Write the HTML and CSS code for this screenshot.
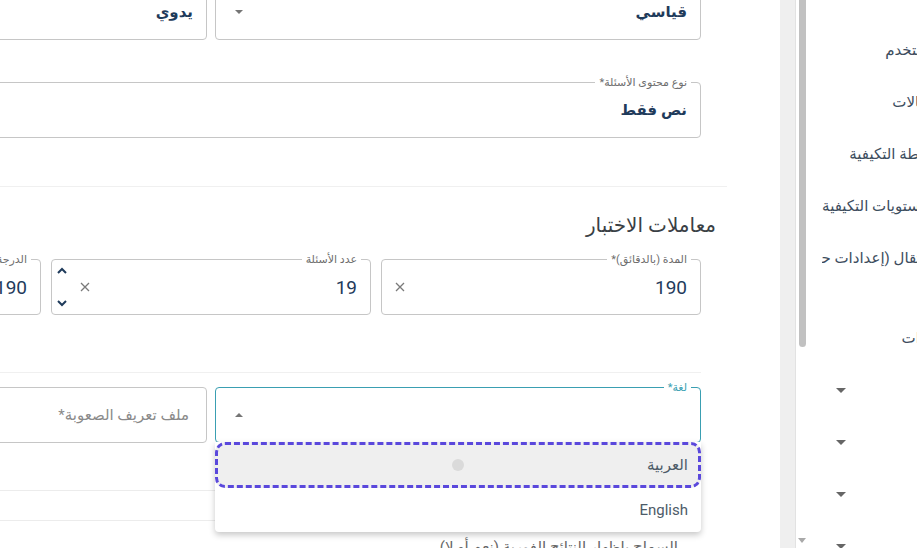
FILE: index.html
```html
<!DOCTYPE html>
<html lang="ar">
<head>
  <meta charset="UTF-8" />
  <title>إعدادات الاختبار</title>
  <link rel="stylesheet" href="styles.css">
</head>
<body>
  <div class="main">
    <div class="panel">

      <div class="row pair">
        <div class="field">
          <span class="label">نوع الاختبار*</span>
          <span class="value">قياسي</span>
          <span class="caret"></span>
        </div>
        <div class="field">
          <span class="label">طريقة التصحيح*</span>
          <span class="value">يدوي</span>
          <span class="caret"></span>
        </div>
      </div>

      <div class="field wide">
        <span class="label">نوع محتوى الأسئلة*</span>
        <span class="value">نص فقط</span>
      </div>

      <div class="divider full"></div>

      <h2 class="section-title">معاملات الاختبار</h2>

      <div class="row triple">
        <div class="field">
          <span class="label">المدة (بالدقائق)*</span>
          <span class="number">190</span>
          <span class="clear">
            <svg width="10" height="10" viewBox="0 0 10 10"><path d="M1 1L9 9M9 1L1 9" /></svg>
          </span>
        </div>
        <div class="field has-spin">
          <span class="label">عدد الأسئلة</span>
          <span class="number">19</span>
          <span class="clear">
            <svg width="10" height="10" viewBox="0 0 10 10"><path d="M1 1L9 9M9 1L1 9" /></svg>
          </span>
          <span class="spin">
            <svg width="12" height="8" viewBox="0 0 12 8"><path d="M2 6L6 2L10 6" /></svg>
            <svg width="12" height="8" viewBox="0 0 12 8"><path d="M2 2L6 6L10 2" /></svg>
          </span>
        </div>
        <div class="field">
          <span class="label">الدرجة النهائية*</span>
          <span class="number">190</span>
          <span class="clear">
            <svg width="10" height="10" viewBox="0 0 10 10"><path d="M1 1L9 9M9 1L1 9" /></svg>
          </span>
        </div>
      </div>

      <div class="divider"></div>

      <div class="row pair lang-row">
        <div class="field focused">
          <span class="label">لغة*</span>
          <span class="caret up"></span>
          <ul class="menu">
            <li class="option active">العربية<span class="ripple"></span></li>
            <li class="option">English</li>
          </ul>
        </div>
        <div class="field">
          <span class="placeholder">ملف تعريف الصعوبة*</span>
        </div>
      </div>

      <div class="toggle-row"></div>
      <div class="hint">السماح بإظهار النتائج الفورية (نعم أو لا)</div>

    </div>
  </div>

  <div class="gutter"></div>

  <aside class="sidebar">
    <div class="scrollbar">
      <div class="thumb"></div>
      <span class="scroll-arrow"></span>
    </div>
    <nav class="nav">
      <div class="nav-item">مستخدم</div>
      <div class="nav-item">الحالات</div>
      <div class="nav-item">الخطة التكيفية</div>
      <div class="nav-item">المستويات التكيفية</div>
      <div class="nav-item">الانتقال (إعدادات حذف الأسئلة)</div>
      <div class="nav-item gap">أدوات</div>
      <div class="nav-item group">التقارير<span class="arrow"></span></div>
      <div class="nav-item group">المحتوى<span class="arrow"></span></div>
      <div class="nav-item group">الأقسام<span class="arrow"></span></div>
      <div class="nav-item group">الدعم<span class="arrow"></span></div>
    </nav>
  </aside>
</body>
</html>
```

FILE: styles.css
```css
* {
  box-sizing: border-box;
}
body {
  margin: 0;
  height: 548px;
  overflow: hidden;
  display: flex;
  background: #fff;
  font-family: Roboto, "DejaVu Sans", sans-serif;
  color: #1f3b5b;
}

/* main form area */
.main {
  width: 780px;
  flex: none;
  overflow: hidden;
  direction: rtl;
}
.panel {
  width: 1006px;
  margin-right: 53px;
  margin-top: -16px;
}
.row,
.field.wide,
.divider,
.toggle-row {
  margin-right: 26px;
}
.row {
  display: grid;
  gap: 8px;
}
.row.pair {
  grid-template-columns: 1fr 1fr;
}
.row.triple {
  grid-template-columns: 1fr 1fr 1fr;
  gap: 10px;
  margin-top: 20px;
}
.field {
  position: relative;
  height: 56px;
  border: 1px solid #c6c6c6;
  border-radius: 4px;
  display: flex;
  align-items: center;
  padding: 0 13px;
}
.field.wide {
  margin-top: 42px;
}
.field.focused {
  border-color: #3a9fb2;
}
.label {
  position: absolute;
  top: -7px;
  right: 9px;
  padding: 0 4px;
  background: #fff;
  font-size: 11px;
  line-height: 13px;
  color: #6e6e6e;
  white-space: nowrap;
}
.field.focused .label {
  color: #3a9fb2;
}
.value {
  font-size: 15px;
  font-weight: 600;
  color: #1f3b5b;
}
.number {
  font-size: 19px;
  color: #1f3b5b;
}
.placeholder {
  font-size: 15px;
  color: #8a8a8a;
  margin-right: 4px;
}
.caret {
  margin-right: auto;
  margin-left: 6px;
  width: 0;
  height: 0;
  border-left: 4px solid transparent;
  border-right: 4px solid transparent;
  border-top: 4px solid #757575;
}
.caret.up {
  border-top: 0;
  border-bottom: 4px solid #757575;
}
.clear {
  margin-right: auto;
  display: flex;
}
.clear path {
  stroke: #7a7a7a;
  stroke-width: 1.3;
  fill: none;
}
.field.has-spin {
  padding-left: 4px;
}
.has-spin .clear {
  margin-left: 12px;
}
.spin {
  height: 40px;
  display: flex;
  flex-direction: column;
  justify-content: space-between;
}
.spin path {
  stroke: #1f3b5b;
  stroke-width: 2;
  fill: none;
}
.divider {
  height: 1px;
  background: #f0f0f0;
  margin-top: 57px;
}
.divider.full {
  margin-right: 0;
  margin-top: 48px;
}
.section-title {
  margin: 24px 11px 0 0;
  font-size: 20px;
  line-height: 28px;
  font-weight: 500;
  color: #3a3f45;
}
.lang-row {
  margin-top: 14px;
}

/* open dropdown */
.menu {
  position: absolute;
  top: 100%;
  left: -1px;
  right: -1px;
  margin: 0;
  padding: 0;
  list-style: none;
  background: #fff;
  border-radius: 0 0 4px 4px;
  box-shadow: 0 3px 6px rgba(0, 0, 0, 0.22);
  z-index: 2;
}
.option {
  position: relative;
  height: 44px;
  line-height: 44px;
  padding: 0 13px;
  font-size: 15px;
  color: #4d5b68;
}
.option.active {
  height: 46px;
  line-height: 46px;
  background: #efefef;
  border-radius: 10px;
  outline: 3px dashed #5a48dc;
  outline-offset: -3px;
}
.ripple {
  position: absolute;
  left: 237px;
  top: 17px;
  width: 12px;
  height: 12px;
  border-radius: 50%;
  background: #dadada;
}
.toggle-row {
  margin-top: 47px;
  height: 31px;
  border-top: 1px solid #ececec;
  border-bottom: 1px solid #ececec;
}
.hint {
  margin: 15px 49px 0 0;
  font-size: 15px;
  line-height: 22px;
  color: #666;
}

/* sidebar */
.gutter {
  width: 16px;
  flex: none;
  background: #efefef;
  border-right: 1px solid #e2e2e2;
}
.sidebar {
  flex: 1;
  display: flex;
  overflow: hidden;
}
.scrollbar {
  width: 12px;
  flex: none;
  display: flex;
  flex-direction: column;
  align-items: center;
}
.thumb {
  width: 7px;
  height: 347px;
  background: #c1c1c1;
  border-radius: 0 0 4px 4px;
}
.scroll-arrow {
  margin-top: auto;
  margin-bottom: 5px;
  border-left: 4px solid transparent;
  border-right: 4px solid transparent;
  border-top: 5px solid #a9a9a9;
}
.nav {
  flex: none;
  width: 200px;
  padding: 24px 0 0 14px;
}
.nav-item {
  direction: rtl;
  display: flex;
  align-items: center;
  height: 52px;
  padding-right: 70px;
  overflow: hidden;
  white-space: nowrap;
  font-size: 15px;
  color: #3d4d5e;
}
.nav-item.group {
  padding-right: 0;
}
.nav-item.gap {
  margin-top: 28px;
}
.arrow {
  margin-right: auto;
  margin-left: 14px;
  border-left: 5px solid transparent;
  border-right: 5px solid transparent;
  border-top: 5px solid #666;
}
```
